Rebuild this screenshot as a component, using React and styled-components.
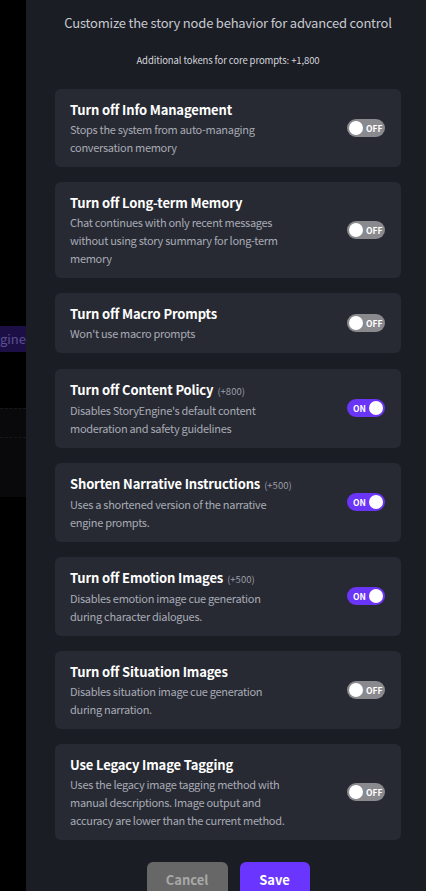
import styled, { createGlobalStyle } from "styled-components";

const GlobalStyle = createGlobalStyle`
  html, body {
    margin: 0;
    padding: 0;
    background: #000;
    height: 891px;
    overflow: hidden;
  }
  * {
    box-sizing: border-box;
  }
`;

const FONT = `"Noto Sans CJK KR", "Noto Sans", sans-serif`;

const options = [
  {
    title: "Turn off Info Management",
    desc: "Stops the system from auto-managing conversation memory",
    on: false,
  },
  {
    title: "Turn off Long-term Memory",
    desc: "Chat continues with only recent messages without using story summary for long-term memory",
    on: false,
  },
  {
    title: "Turn off Macro Prompts",
    desc: "Won't use macro prompts",
    on: false,
  },
  {
    title: "Turn off Content Policy",
    extra: "(+800)",
    desc: "Disables StoryEngine's default content moderation and safety guidelines",
    on: true,
  },
  {
    title: "Shorten Narrative Instructions",
    extra: "(+500)",
    desc: "Uses a shortened version of the narrative engine prompts.",
    on: true,
  },
  {
    title: "Turn off Emotion Images",
    extra: "(+500)",
    desc: "Disables emotion image cue generation during character dialogues.",
    on: true,
  },
  {
    title: "Turn off Situation Images",
    desc: "Disables situation image cue generation during narration.",
    on: false,
  },
  {
    title: "Use Legacy Image Tagging",
    desc: "Uses the legacy image tagging method with manual descriptions. Image output and accuracy are lower than the current method.",
    on: false,
  },
];

const Screen = styled.div`
  display: flex;
  width: 426px;
  height: 891px;
  font-family: ${FONT};
  overflow: hidden;
`;

const Backdrop = styled.div`
  width: 26px;
  flex-shrink: 0;
  background: #000;
  display: flex;
  flex-direction: column;
  overflow: hidden;
`;

const BackChip = styled.div`
  margin-top: 326px;
  height: 26px;
  background: #1c0f45;
  color: #5b4f8f;
  font-size: 13px;
  line-height: 26px;
  display: flex;
  justify-content: flex-end;
  white-space: nowrap;
`;

const BackRow = styled.div`
  margin-top: ${(p) => p.$top}px;
  height: ${(p) => p.$h}px;
  background: #09090b;
  border-top: 1px dashed #17171b;
`;

const Panel = styled.div`
  flex: 1;
  background: #1b1d24;
  padding: 13px 25px 0 29px;
  display: flex;
  flex-direction: column;
`;

const Heading = styled.p`
  margin: 0;
  text-align: center;
  color: #c6c9d0;
  font-size: 13px;
  line-height: 20px;
  letter-spacing: -0.2px;
  white-space: nowrap;
`;

const Tokens = styled.p`
  margin: 20px 0 22px;
  text-align: center;
  color: #d4d6dc;
  font-size: 9.5px;
  line-height: 14px;
  letter-spacing: -0.1px;
`;

const List = styled.div`
  display: flex;
  flex-direction: column;
  gap: 15.2px;
`;

const Card = styled.div`
  background: #282a33;
  border-radius: 6px;
  padding: 11px 16px 11px 15px;
  display: flex;
  align-items: center;
  justify-content: space-between;
`;

const Texts = styled.div`
  max-width: 222px;
`;

const Title = styled.div`
  color: #fff;
  font-size: 13px;
  font-weight: 700;
  line-height: 20px;
  letter-spacing: -0.15px;
  white-space: nowrap;
`;

const Extra = styled.span`
  color: #9a9ea8;
  font-size: 9.5px;
  font-weight: 400;
  margin-left: 4px;
  letter-spacing: 0;
`;

const Desc = styled.div`
  color: #a7abb5;
  font-size: 11px;
  line-height: 18px;
  letter-spacing: -0.3px;
`;

const Track = styled.div`
  width: 38px;
  height: 18px;
  border-radius: 9px;
  background: ${(p) => (p.$on ? "#6a35f6" : "#8a8a8e")};
  display: flex;
  flex-direction: ${(p) => (p.$on ? "row-reverse" : "row")};
  align-items: center;
  padding: 0 2px;
  gap: 3px;
  flex-shrink: 0;
`;

const Knob = styled.div`
  width: 14px;
  height: 14px;
  border-radius: 50%;
  background: #fff;
`;

const Label = styled.span`
  color: #fff;
  font-size: 8.5px;
  font-weight: 700;
  line-height: 18px;
`;

const Footer = styled.div`
  display: flex;
  justify-content: center;
  gap: 12px;
  margin-top: 22px;
`;

const Button = styled.button`
  font-family: ${FONT};
  height: 36px;
  border: none;
  border-radius: 6px;
  font-size: 13px;
  font-weight: 700;
  padding: 0 0 2px;
  width: ${(p) => (p.$primary ? 70 : 81)}px;
  background: ${(p) => (p.$primary ? "#6a35ff" : "#676767")};
  color: ${(p) => (p.$primary ? "#fff" : "#a9a9a9")};
`;

function Toggle({ on }) {
  return (
    <Track $on={on}>
      <Knob />
      <Label>{on ? "ON" : "OFF"}</Label>
    </Track>
  );
}

export default function App() {
  return (
    <>
      <GlobalStyle />
      <Screen>
        <Backdrop>
          <BackChip>StoryEngine</BackChip>
          <BackRow $top={56} $h={29} />
          <BackRow $top={0} $h={60} />
        </Backdrop>
        <Panel>
          <Heading>Customize the story node behavior for advanced control</Heading>
          <Tokens>Additional tokens for core prompts: +1,800</Tokens>
          <List>
            {options.map((o) => (
              <Card key={o.title}>
                <Texts>
                  <Title>
                    {o.title}
                    {o.extra && <Extra>{o.extra}</Extra>}
                  </Title>
                  <Desc>{o.desc}</Desc>
                </Texts>
                <Toggle on={o.on} />
              </Card>
            ))}
          </List>
          <Footer>
            <Button>Cancel</Button>
            <Button $primary>Save</Button>
          </Footer>
        </Panel>
      </Screen>
    </>
  );
}
